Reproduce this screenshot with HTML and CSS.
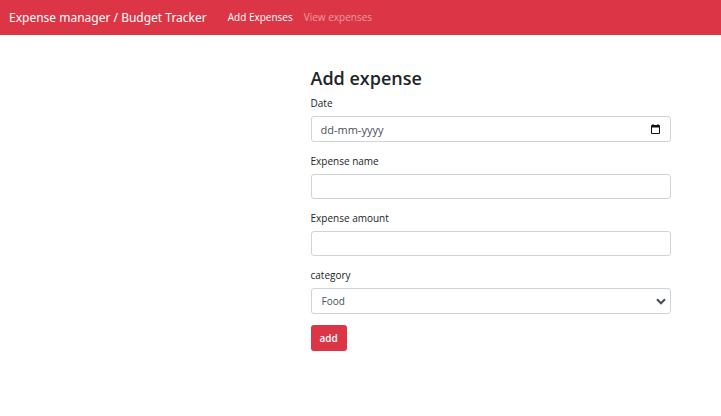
FILE: index.html
```html
<!DOCTYPE html>
<html lang="en">
<head>
<meta charset="utf-8">
<meta name="viewport" content="width=device-width, initial-scale=1">
<title>Expense manager / Budget Tracker</title>
<link rel="stylesheet" href="styles.css">
</head>
<body>
<nav class="navbar">
  <a class="brand" href="#">Expense manager / Budget Tracker</a>
  <a class="nav-link active" href="#">Add Expenses</a>
  <a class="nav-link" href="#">View expenses</a>
</nav>
<main class="content">
  <h1 class="title">Add expense</h1>
  <form>
    <div class="group">
      <label for="date">Date</label>
      <div class="control date-control">
        <input class="date-input" id="date" type="text" placeholder="dd-mm-yyyy">
        <button class="picker" type="button" aria-label="Choose date">
          <svg width="9" height="10" viewBox="0 0 9 10"><path d="M1.5 0h1v1h4V0h1v1H8a1 1 0 0 1 1 1v7a1 1 0 0 1-1 1H1a1 1 0 0 1-1-1V2a1 1 0 0 1 1-1h.5zM1 3.500V9h7V3.500z" fill="#111" fill-rule="evenodd"/></svg>
        </button>
      </div>
    </div>
    <div class="group">
      <label for="name">Expense name</label>
      <input class="control" id="name" type="text">
    </div>
    <div class="group">
      <label for="amount">Expense amount</label>
      <input class="control" id="amount" type="text">
    </div>
    <div class="group">
      <label for="category">category</label>
      <div class="select-wrap">
        <select class="control select" id="category"><option>Food</option></select>
        <svg class="chevron" width="10" height="7" viewBox="0 0 10 7"><path d="M1 1.200l4 4 4-4" fill="none" stroke="#495057" stroke-width="2.200"/></svg>
      </div>
    </div>
    <button class="submit" type="submit">add</button>
  </form>
</main>
</body>
</html>
```
FILE: styles.css
```css
* {
  box-sizing: border-box;
}

body {
  margin: 0;
  background: #fff;
  color: #212529;
  font: 10px/17px "Open Sans", "Noto Sans", sans-serif;
}

.navbar {
  display: flex;
  align-items: center;
  min-height: 35px;
  padding: 0 9px;
  background: #dc3545;
}

.brand {
  margin-right: 21px;
  color: #fff;
  font-family: "Noto Sans", sans-serif;
  font-size: 12px;
  text-decoration: none;
}

.nav-link {
  margin-right: 11px;
  color: rgba(255, 255, 255, 0.5);
  font-weight: 500;
  text-decoration: none;
}

.nav-link.active {
  color: #fff;
}

.content {
  width: 50%;
  margin: 32px 50px 0 auto;
}

.title {
  margin: 0 0 6px;
  font-size: 18px;
  font-weight: 600;
  line-height: 22px;
}

.group {
  margin-bottom: 11px;
}

label {
  display: block;
  margin-bottom: 4px;
}

.control {
  display: block;
  width: 100%;
  height: 25px;
  padding: 0 9px;
  border: 1px solid #ced4da;
  border-radius: 3px;
  background: #fff;
  color: #495057;
  font: inherit;
}

.date-control {
  display: flex;
  align-items: center;
  height: 26px;
}

.date-input {
  flex: 1;
  min-width: 0;
  height: 24px;
  padding: 0;
  border: 0;
  outline: 0;
  background: none;
  color: inherit;
  font: inherit;
  font-size: 11px;
}

.date-input::placeholder {
  color: #495057;
  opacity: 1;
}

.picker {
  display: flex;
  margin: 0 1px 0 0;
  padding: 0;
  border: 0;
  background: none;
}

.select-wrap {
  position: relative;
}

.select {
  height: 26px;
  padding: 0 10px;
  appearance: none;
}

.chevron {
  position: absolute;
  top: 10px;
  right: 5px;
  pointer-events: none;
}

.submit {
  height: 26px;
  padding: 0 9px;
  border: 0;
  border-radius: 3px;
  background: #dc3545;
  color: #fff;
  font: inherit;
  font-weight: 600;
}
```
